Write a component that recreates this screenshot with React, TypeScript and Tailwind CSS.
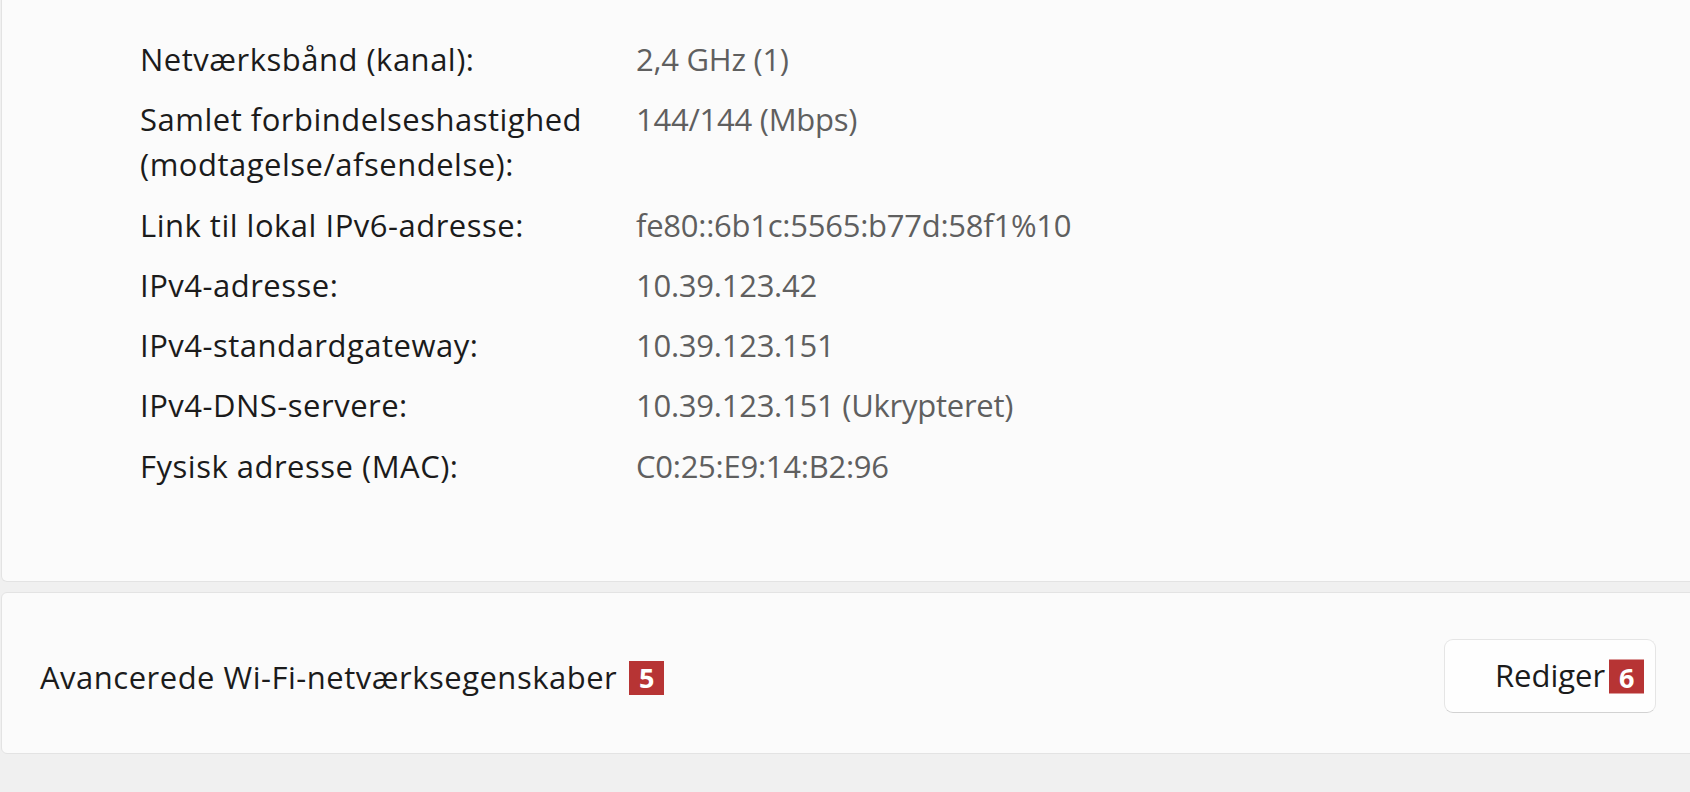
import React from 'react';

type Row = { label: React.ReactNode; value: string };

const rows: Row[] = [
  { label: 'Netværksbånd (kanal):', value: '2,4 GHz (1)' },
  { label: 'Samlet forbindelseshastighed (modtagelse/afsendelse):', value: '144/144 (Mbps)' },
  { label: 'Link til lokal IPv6-adresse:', value: 'fe80::6b1c:5565:b77d:58f1%10' },
  { label: 'IPv4-adresse:', value: '10.39.123.42' },
  { label: 'IPv4-standardgateway:', value: '10.39.123.151' },
  { label: 'IPv4-DNS-servere:', value: '10.39.123.151 (Ukrypteret)' },
  { label: 'Fysisk adresse (MAC):', value: 'C0:25:E9:14:B2:96' },
];

const Badge: React.FC<{ n: number }> = ({ n }) => (
  <span className="inline-flex h-[34px] w-[35px] items-center justify-center bg-[#b73434] text-[27px] font-bold leading-none tracking-normal text-white">
    {n}
  </span>
);

const App: React.FC = () => {
  return (
    <div
      className="h-[792px] w-full overflow-hidden bg-[#f0f0f0] text-[#1b1b1b]"
      style={{ fontFamily: '"Open Sans", "Noto Sans", sans-serif' }}
    >
      <div className="w-[1720px] pl-px">
        {/* Properties card */}
        <div className="h-[582px] rounded-b-[6px] border border-t-0 border-[#e3e3e3] bg-[#fbfbfb] pl-[138px] pt-[37px]">
          <div className="grid grid-cols-[496px_1fr] gap-y-[15.3px] text-[31px] leading-[45px]">
            {rows.map((r, i) => (
              <React.Fragment key={i}>
                <div className="pr-4 tracking-[0.5px]">{r.label}</div>
                <div className="tracking-[-0.25px] text-[#5f5f5f]">{r.value}</div>
              </React.Fragment>
            ))}
          </div>
        </div>

        {/* Advanced settings card */}
        <div className="mt-[10px] flex h-[162px] items-center justify-between rounded-[6px] border border-[#e3e3e3] bg-[#fbfbfb] pl-[38px] pr-[63px] pt-[5px]">
          <div className="mt-[4px] flex items-center gap-[12px] text-[31px] leading-[45px] tracking-[0.5px]">
            <span>Avancerede Wi-Fi-netværksegenskaber</span>
            <Badge n={5} />
          </div>
          <button className="flex h-[74px] w-[212px] items-center justify-center rounded-[9px] border border-[#e5e5e5] border-b-[#d2d2d2] bg-[#fefefe] text-[31px] leading-[45px] text-[#1b1b1b]">
            <span className="relative">
              Rediger
              <span className="absolute left-full top-1/2 ml-[4px] -translate-y-1/2">
                <Badge n={6} />
              </span>
            </span>
          </button>
        </div>
      </div>
    </div>
  );
};

export default App;
